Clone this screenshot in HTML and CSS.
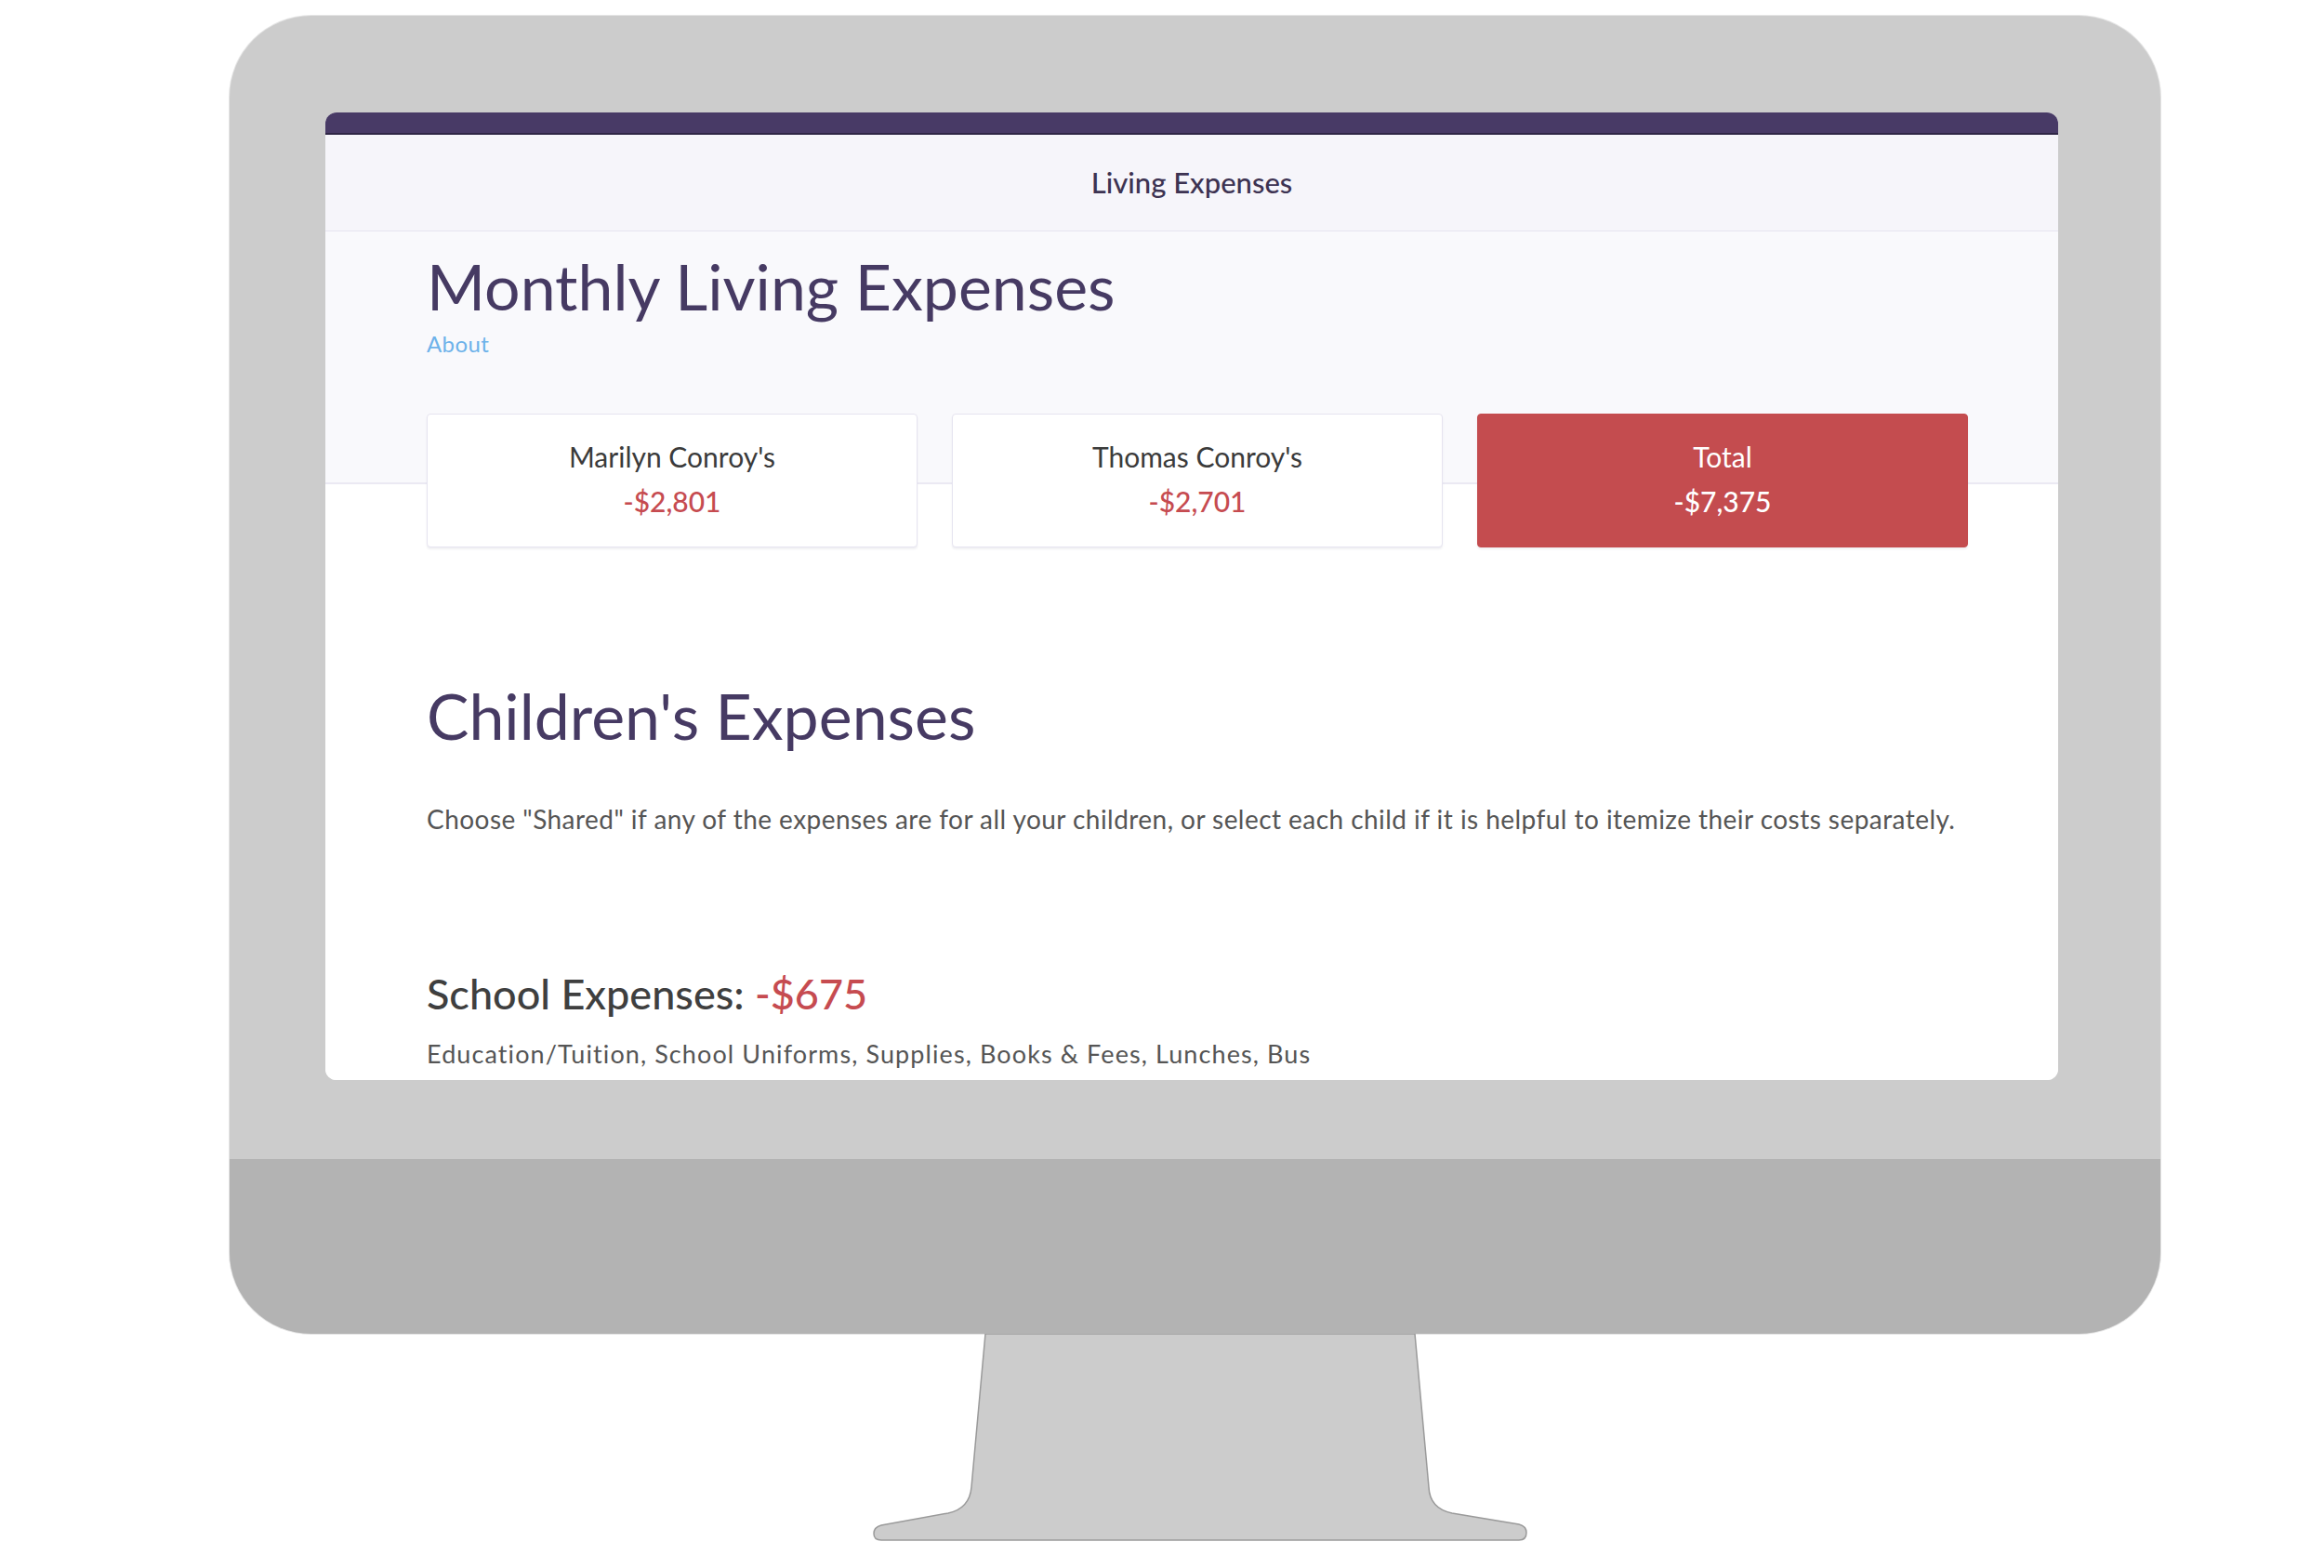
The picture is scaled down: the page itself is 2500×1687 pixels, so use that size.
FILE: index.html
```html
<!DOCTYPE html>
<html>
<head>
<meta charset="utf-8">
<link rel="stylesheet" href="styles.css">
</head>
<body>
<div class="scene">
  <div class="monitor">
    <div class="bezel">
      <div class="screen">
        <div class="topbar"></div>
        <div class="header">Living Expenses</div>
        <div class="content">
          <h1 class="title">Monthly Living Expenses</h1>
          <a class="about">About</a>
          <div class="cards">
            <div class="card">
              <div class="card-label">Marilyn Conroy's</div>
              <div class="card-amount">-$2,801</div>
            </div>
            <div class="card">
              <div class="card-label">Thomas Conroy's</div>
              <div class="card-amount">-$2,701</div>
            </div>
            <div class="card card-total">
              <div class="card-label">Total</div>
              <div class="card-amount">-$7,375</div>
            </div>
          </div>
          <h2 class="section-title">Children's Expenses</h2>
          <p class="intro">Choose "Shared" if any of the expenses are for all your children, or select each child if it is helpful to itemize their costs separately.</p>
          <h3 class="group-title">School Expenses: <span class="neg">-$675</span></h3>
          <p class="group-sub">Education/Tuition, School Uniforms, Supplies, Books &amp; Fees, Lunches, Bus</p>
        </div>
      </div>
    </div>
    <div class="chin"></div>
  </div>
  <svg class="stand" width="722" height="226" viewBox="0 0 722 226">
    <path d="M130 0 L115 165 Q113 188 90 193 L18 206 Q10 208 10 215 Q10 222 18 222 L704 222 Q712 222 712 214 Q712 207 704 205 L632 193 Q608 188 607 165 L592 0 Z" fill="#cccccc" stroke="#9a9a9a" stroke-width="1.5"/>
  </svg>
</div>
</body>
</html>
```

FILE: styles.css
```css
html, body {
  margin: 0;
  padding: 0;
  background: #ffffff;
}
body {
  width: 2500px;
  height: 1687px;
  overflow: hidden;
  font-family: "Lato", "Liberation Sans", sans-serif;
}
.scene {
  padding-top: 17px;
  padding-left: 247px;
}
.monitor {
  width: 2077px;
  height: 1418px;
  border-radius: 88px;
  overflow: hidden;
  background: #cccccc;
  display: flex;
  flex-direction: column;
  box-shadow: 0 0 0 1px #e4e4e4;
}
.bezel {
  height: 1230px;
  padding-top: 104px;
  padding-left: 103px;
  box-sizing: border-box;
}
.chin {
  height: 188px;
  background: #b3b3b3;
}
.screen {
  width: 1864px;
  height: 1041px;
  border-radius: 12px;
  overflow: hidden;
  background: #ffffff;
  display: flex;
  flex-direction: column;
}
.topbar {
  height: 22px;
  background: #483a66;
  border-bottom: 2px solid #2f2645;
  flex: none;
}
.header {
  height: 104px;
  flex: none;
  background: #f6f5fa;
  border-bottom: 1px solid #e6e4f0;
  box-sizing: border-box;
  display: flex;
  align-items: center;
  justify-content: center;
  color: #3d3352;
  font-size: 31px;
  font-weight: 500;
  padding-bottom: 2px;
}
.content {
  flex: 1;
  padding: 19px 0 0 109px;
  background: linear-gradient(#f9f9fc 0, #f9f9fc 270px, #ebe9f3 270px, #ebe9f3 272px, #ffffff 272px);
}
.title {
  margin: 0;
  font-size: 68px;
  line-height: 80px;
  font-weight: 400;
  color: #463a63;
}
.about {
  display: block;
  margin-top: 7px;
  font-size: 24px;
  line-height: 30px;
  letter-spacing: 0.4px;
  color: #6db2ea;
}
.cards {
  margin-top: 60px;
  display: grid;
  grid-template-columns: 528px 528px 528px;
  column-gap: 37px;
}
.card {
  height: 144px;
  box-sizing: border-box;
  background: #ffffff;
  border: 1px solid #e6e4f0;
  border-radius: 4px;
  box-shadow: 0 2px 2px rgba(70, 58, 99, 0.08);
  padding-top: 27px;
  text-align: center;
}
.card-label {
  font-size: 30px;
  line-height: 36px;
  color: #3b3b3b;
}
.card-amount {
  margin-top: 12px;
  font-size: 30px;
  line-height: 36px;
  font-weight: 500;
  color: #c64b50;
}
.card-total {
  background: #c44c4f;
  border-color: #c44c4f;
}
.card-total .card-label,
.card-total .card-amount {
  color: #ffffff;
}
.section-title {
  margin: 141px 0 0 0;
  font-size: 68px;
  line-height: 80px;
  font-weight: 400;
  color: #463a63;
}
.intro {
  margin: 53px 0 0 0;
  font-size: 28px;
  line-height: 36px;
  letter-spacing: 0.45px;
  color: #555555;
}
.group-title {
  margin: 143px 0 0 0;
  font-size: 45px;
  line-height: 54px;
  font-weight: 500;
  color: #3f3f3f;
}
.neg {
  color: #c64b50;
}
.group-sub {
  margin: 21px 0 0 0;
  font-size: 27px;
  line-height: 34px;
  letter-spacing: 1.1px;
  color: #555555;
}
.stand {
  display: block;
  margin-left: 683px;
}
```
